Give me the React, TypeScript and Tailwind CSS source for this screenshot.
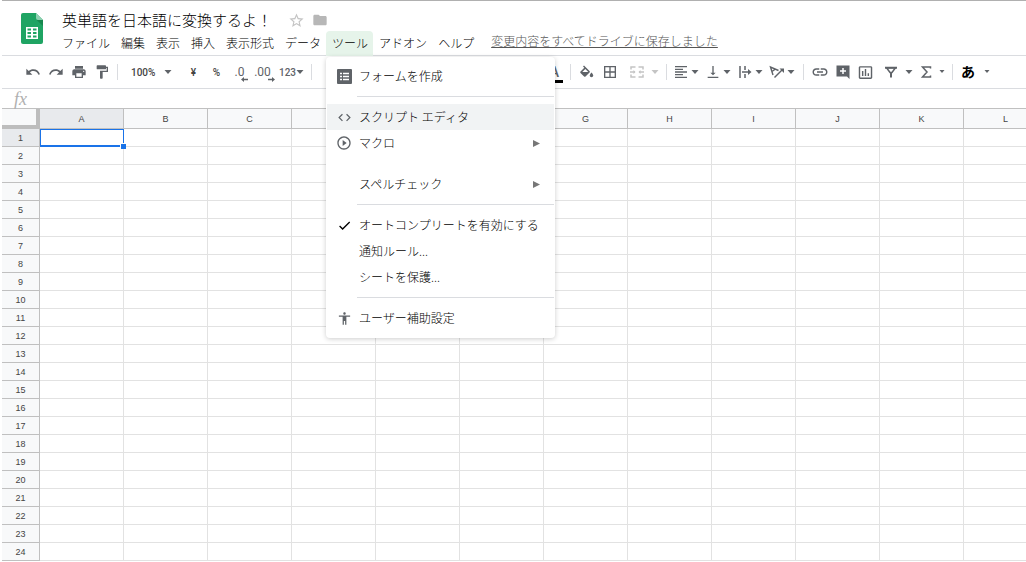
import React from 'react';
import {
  MdAccessibility,
  MdBorderAll,
  MdCheck,
  MdCode,
  MdFolder,
  MdFormatAlignLeft,
  MdFormatPaint,
  MdInsertChartOutlined,
  MdLink,
  MdPlayCircleOutline,
  MdPrint,
  MdRedo,
  MdStarBorder,
  MdUndo,
  MdVerticalAlignBottom,
} from 'react-icons/md';

const COLUMNS = ['A', 'B', 'C', 'D', 'E', 'F', 'G', 'H', 'I', 'J', 'K', 'L'];
const ROWS = Array.from({ length: 24 }, (_, i) => i + 1);

const SheetsLogo = () => (
  <svg viewBox="0 0 22 31" className="w-[22px] h-[31px] shrink-0" aria-hidden="true">
    <path d="M2 0h13l7 7v22a2 2 0 0 1-2 2H2a2 2 0 0 1-2-2V2a2 2 0 0 1 2-2z" fill="#1fa463" />
    <path d="M15 0l7 7h-5a2 2 0 0 1-2-2z" fill="#8ed1b1" />
    <path d="M15.6 7H22v6z" fill="#17884f" />
    <path d="M5 14h12v12H5zM6.500 15.500v2H10v-2zM12 15.500v2h3.500v-2zM6.500 19v2H10v-2zM12 19v2h3.500v-2zM6.500 22.500v2H10v-2zM12 22.500v2h3.500v-2z" fill="#fff" fillRule="evenodd" />
  </svg>
);

const FillIcon = () => (
  <svg viewBox="0 0 16 16" className="w-4 h-4 shrink-0">
    <path d="M5 1.500L10.500 7 11 8l-4.500 4.500a1 1 0 0 1-1.400 0L1.500 9a1 1 0 0 1 0-1.400L5.300 3.800 4 2.500zM6.300 4.900L3.300 7.900h6z" fill="currentColor" fillRule="evenodd" />
    <path d="M12.500 8.500s1.700 1.900 1.700 3a1.700 1.700 0 0 1-3.400 0c0-1.100 1.700-3 1.700-3z" fill="currentColor" />
  </svg>
);

const MergeIcon = () => (
  <svg viewBox="0 0 16 16" className="w-4 h-4 shrink-0" fill="none" stroke="currentColor" strokeWidth="1.500">
    <path d="M2 5.500V3h4.500M9.500 3H14v2.500M2 10.500V13h4.500M9.500 13H14v-2.500M1 8h5M15 8h-5" />
    <path d="M4.500 6l2 2-2 2zM11.500 6l-2 2 2 2z" fill="currentColor" stroke="none" />
  </svg>
);

const OverflowIcon = () => (
  <svg viewBox="0 0 16 16" className="w-4 h-4 shrink-0" fill="none" stroke="currentColor" strokeWidth="1.500">
    <path d="M3 2v12M8 2v4M8 10v4M5 8h7" />
    <path d="M11 5l3.500 3-3.500 3z" fill="currentColor" stroke="none" />
  </svg>
);

const RotateIcon = () => (
  <svg viewBox="0 0 16 16" className="w-4 h-4 shrink-0" fill="none" stroke="currentColor" strokeWidth="1.400">
    <path d="M4 11L1.500 3l8 3.500M3 7.500L6.500 5" />
    <path d="M5.500 13.500L13 6" />
    <path d="M10.500 4.500H15V9z" fill="currentColor" stroke="none" />
  </svg>
);

const CommentIcon = () => (
  <svg viewBox="0 0 16 16" className="w-4 h-4 shrink-0">
    <path d="M1.500 1.500h13V15L12 12.500H1.500z" fill="currentColor" />
    <path d="M8 4v6M5 7h6" stroke="#fff" strokeWidth="1.500" />
  </svg>
);

const FilterIcon = () => (
  <svg viewBox="0 0 16 16" className="w-4 h-4 shrink-0" fill="none" stroke="currentColor" strokeWidth="1.500">
    <path d="M3.500 3.800h9L9 8.500H7z" />
    <path d="M2 3.800h12M8 8v5.500" strokeWidth="2" />
  </svg>
);

const SigmaIcon = () => (
  <svg viewBox="0 0 16 16" className="w-4 h-4 shrink-0" fill="none" stroke="currentColor" strokeWidth="1.500">
    <path d="M12.500 4.500V3h-8l4.500 5-4.500 5h8v-1.500" />
  </svg>
);

const FormIcon = () => (
  <svg viewBox="0 0 15 15" className="w-[15px] h-[15px] shrink-0">
    <rect width="15" height="15" rx="1" fill="#5f6368" />
    <path d="M3 4.500h2M3 7.500h2M3 10.500h2M6 4.500h6M6 7.500h6M6 10.500h6" stroke="#fff" strokeWidth="1.500" />
  </svg>
);

const Caret = ({ small }: { small?: boolean }) => (
  <svg viewBox="0 0 8 4" className="w-2 h-1 shrink-0" aria-hidden="true">
    <path d={small ? 'M1.500 0h5L4 3z' : 'M.5 0h7L4 4z'} fill="currentColor" />
  </svg>
);

const Divider = () => <div className="mx-1 w-px h-4 bg-[#dadce0] shrink-0" />;

const Tool = ({ label, children }: any) => (
  <button aria-label={label} className="w-[23px] h-6 flex items-center justify-center shrink-0">
    {children}
  </button>
);

const DropTool = ({ label, className = 'w-8 pl-0.5 gap-0.5', small, children }: any) => (
  <button aria-label={label} className={`h-6 flex items-center shrink-0 ${className}`}>
    {children}
    <Caret small={small} />
  </button>
);

// Number with a small arrow beneath it, for adding or removing decimals
const Decimal = ({ text, right }: { text: string; right?: boolean }) => (
  <span className="relative leading-4 text-xs font-normal">
    {text}
    <svg viewBox="0 0 7 5" className={`absolute -bottom-0.5 -right-1 w-[7px] h-[5px] ${right ? 'rotate-180' : ''}`}>
      <path d="M0 2.500L3 0v1.800h4v1.400H3V5z" fill="currentColor" />
    </svg>
  </span>
);

const MenuItem = ({ icon, label, active, submenu }: any) => (
  <button
    role="menuitem"
    className={`w-full h-[26px] flex items-center text-left ${active ? 'bg-[#f1f3f4]' : ''}`}
  >
    <span className="w-8 pl-0.5 flex items-center justify-center text-[#5f6368]">{icon}</span>
    <span className="flex-1">{label}</span>
    {submenu && (
      <svg viewBox="0 0 7 7" className="w-[7px] h-[7px] mr-3.5" aria-hidden="true">
        <path d="M0 0l7 3.500L0 7z" fill="#777" />
      </svg>
    )}
  </button>
);

const MenuLine = ({ hidden }: { hidden?: boolean }) => (
  <div className={`my-[7px] ml-[30px] h-px ${hidden ? '' : 'bg-[#dadce0]'}`} />
);

const ToolsMenu = () => (
  <div
    role="menu"
    className="absolute z-20 left-0 top-full mt-0.5 w-[229px] px-px pt-1.5 pb-[7px] bg-white rounded-sm text-black shadow-[0_1px_5px_rgba(0,0,0,0.2)]"
  >
    <MenuItem icon={<FormIcon />} label="フォームを作成" />
    <MenuLine />
    <MenuItem icon={<MdCode size={15} />} label="スクリプト エディタ" active />
    <MenuItem icon={<MdPlayCircleOutline size={16} />} label="マクロ" submenu />
    <MenuLine hidden />
    <MenuItem label="スペルチェック" submenu />
    <MenuLine />
    <MenuItem icon={<MdCheck size={15} className="text-black" />} label="オートコンプリートを有効にする" />
    <MenuItem label="通知ルール..." />
    <MenuItem label="シートを保護..." />
    <MenuLine />
    <MenuItem icon={<MdAccessibility size={15} />} label="ユーザー補助設定" />
  </div>
);

const MenuBar = () => (
  <nav className="flex text-xs font-light">
    {['ファイル', '編集', '表示', '挿入', '表示形式', 'データ', 'ツール', 'アドオン', 'ヘルプ'].map((name) => {
      const open = name === 'ツール';
      return (
        <div key={name} className="relative h-6 shrink-0">
          <button className={`h-[25px] pb-0.5 pl-1.5 pr-[5px] rounded-t ${open ? 'bg-[#e6f4ea]' : ''}`}>{name}</button>
          {open && <ToolsMenu />}
        </div>
      );
    })}
    <a href="#" className="ml-3 h-5 leading-5 text-[#555] underline whitespace-nowrap">
      変更内容をすべてドライブに保存しました
    </a>
  </nav>
);

const Header = () => (
  <header className="flex border-t border-b border-t-[#b0b0b0] border-b-[#dadce0] pl-[19px]">
    <div className="pt-3">
      <SheetsLogo />
    </div>
    <div className="ml-[13px] flex-1">
      <div className="h-[30px] pt-2 pl-1.5 flex items-center">
        <h1 className="text-[15px] leading-5 font-light">英単語を日本語に変換するよ！</h1>
        <button aria-label="スター" className="ml-4 text-[#c4c4c4]">
          <MdStarBorder size={17} />
        </button>
        <button aria-label="フォルダに移動" className="ml-[7px] text-[#b7b7b7]">
          <MdFolder size={16} />
        </button>
      </div>
      <MenuBar />
    </div>
  </header>
);

const Toolbar = () => (
  <div className="h-[33px] pl-[19px] flex items-center border-b border-[#dadce0] text-[#5f6368] text-[10px] font-medium font-['Roboto','Noto_Sans_CJK_JP',sans-serif]">
    <Tool label="元に戻す"><MdUndo size={16} /></Tool>
    <Tool label="やり直し"><MdRedo size={16} /></Tool>
    <Tool label="印刷"><MdPrint size={16} /></Tool>
    <Tool label="書式を貼り付け"><MdFormatPaint size={16} /></Tool>
    <Divider />
    <label className="w-[60px] pl-[9px] flex items-center shrink-0">
      <select aria-label="ズーム" className="w-[33px] appearance-none bg-transparent text-[#444]" defaultValue="100%">
        <option>100%</option>
      </select>
      <Caret />
    </label>
    <Tool label="通貨"><span className="text-[#444]">¥</span></Tool>
    <Tool label="パーセント"><span className="text-[#444]">%</span></Tool>
    <Tool label="小数点以下の桁数を減らす"><Decimal text=".0" /></Tool>
    <Tool label="小数点以下の桁数を増やす"><Decimal text=".00" right /></Tool>
    <DropTool label="表示形式の詳細" className="w-[33px] pl-[5px]">
      <span>123</span>
    </DropTool>
    <Divider />
    <div className="w-[250px] flex justify-end shrink-0">
      <Tool label="テキストの色">
        <span className="w-4 h-[19px] mt-0.5 text-center text-sm leading-4 border-b-[3px] border-black">A</span>
      </Tool>
    </div>
    <Divider />
    <Tool label="塗りつぶしの色"><FillIcon /></Tool>
    <Tool label="枠線"><MdBorderAll size={16} /></Tool>
    <DropTool label="セルを結合" className="w-[41px] pl-2 gap-1.5 text-[#c4c4c4]"><MergeIcon /></DropTool>
    <Divider />
    <DropTool label="水平方向の配置"><MdFormatAlignLeft size={16} /></DropTool>
    <DropTool label="垂直方向の配置"><MdVerticalAlignBottom size={16} /></DropTool>
    <DropTool label="テキストを折り返す"><OverflowIcon /></DropTool>
    <DropTool label="テキストの回転"><RotateIcon /></DropTool>
    <Divider />
    <Tool label="リンクを挿入"><MdLink size={18} /></Tool>
    <Tool label="コメントを挿入"><CommentIcon /></Tool>
    <Tool label="グラフを挿入"><MdInsertChartOutlined size={17} /></Tool>
    <DropTool label="フィルタ" className="w-[37px] pl-1.5 gap-1.5"><FilterIcon /></DropTool>
    <DropTool label="関数" className="w-[34px] pl-1 gap-1" small><SigmaIcon /></DropTool>
    <Divider />
    <DropTool label="入力ツール" className="w-[37px] pl-1 gap-2" small>
      <span className="text-sm font-bold text-black">あ</span>
    </DropTool>
  </div>
);

const FormulaBar = () => (
  <div className="h-[19px] pl-3 flex items-center">
    <label htmlFor="formula" className="font-['Liberation_Serif',serif] italic text-lg leading-4 text-[#b0b0b0]">
      fx
    </label>
    <input id="formula" className="ml-3 flex-1 outline-none text-xs" />
  </div>
);

const Grid = () => (
  <div className="overflow-hidden">
    <table className="table-fixed border-separate border-spacing-0 w-[1046px] border-t border-[#c0c0c0] text-[9px] leading-3 text-[#444] font-['Liberation_Sans',sans-serif]">
      <colgroup>
        <col className="w-[38px]" />
        {COLUMNS.map((c) => <col key={c} className="w-[84px]" />)}
      </colgroup>
      <thead>
        <tr className="h-5">
          <td className="p-0 bg-[#f8f9fa] border-r-4 border-b-4 border-[#bdbdbd]" />
          {COLUMNS.map((c) => (
            <th
              key={c}
              className={`p-0 font-normal border-r border-b border-[#c0c0c0] ${c === 'A' ? 'bg-[#e8eaed]' : 'bg-[#f8f9fa]'}`}
            >
              {c}
            </th>
          ))}
        </tr>
      </thead>
      <tbody>
        {ROWS.map((r) => (
          <tr key={r} className="h-[18px]">
            <th className={`p-0 font-normal border-r border-b border-[#c0c0c0] ${r === 1 ? 'bg-[#e8eaed]' : 'bg-[#f8f9fa]'}`}>
              {r}
            </th>
            {COLUMNS.map((c) => (
              <td key={c} className="relative p-0 border-r border-b border-[#e2e2e2]">
                {r === 1 && c === 'A' && (
                  <div className="absolute z-10 inset-0 -right-px -bottom-px border border-b-2 border-[#1a73e8]">
                    <div className="absolute -right-[3px] -bottom-[4px] w-1.5 h-1.5 bg-[#1a73e8] border-t border-l border-white" />
                  </div>
                )}
              </td>
            ))}
          </tr>
        ))}
      </tbody>
    </table>
  </div>
);

const App: React.FC = () => {
  return (
    <div className="pl-0.5 min-h-screen bg-white text-black font-['Noto_Sans_CJK_JP',sans-serif] overflow-hidden">
      <Header />
      <Toolbar />
      <FormulaBar />
      <Grid />
    </div>
  );
};

export default App;
